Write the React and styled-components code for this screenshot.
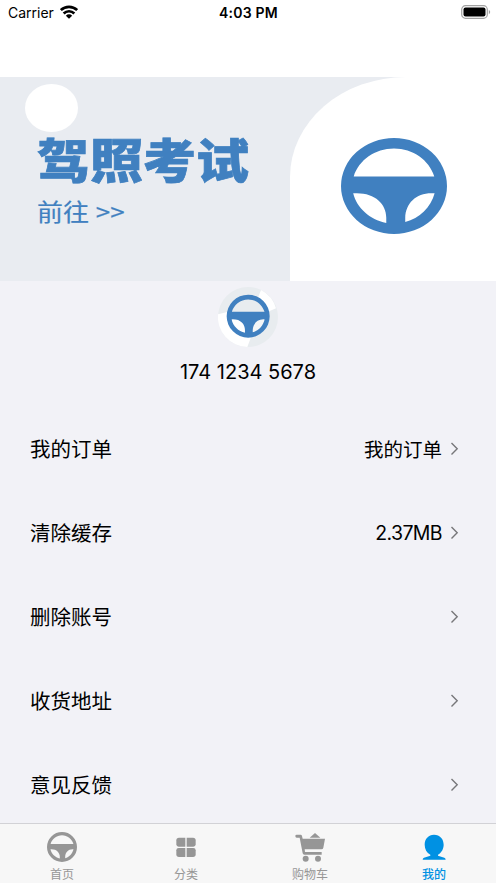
import React from 'react';
import styled, { createGlobalStyle } from 'styled-components';

// --- Styled Components ---
const GlobalStyle = createGlobalStyle`
  * {
    box-sizing: border-box;
  }

  body {
    margin: 0;
    background: #fff;
    color: #000;
    font-family: 'Inter', 'Noto Sans CJK SC', sans-serif;
  }
`;

const Screen = styled.div`
  width: 496px;
  height: 883px;
  display: flex;
  flex-direction: column;
  overflow: hidden;
  background: #f2f2f7;
`;

const StatusBar = styled.header`
  height: 77px;
  flex-shrink: 0;
  padding: 4px 5px 0 8px;
  display: grid;
  grid-template-columns: 1fr auto 1fr;
  align-items: start;
  background: #fff;
  font-size: 14px;
  line-height: 18px;
`;

const Carrier = styled.div`
  display: flex;
  align-items: center;
  gap: 6px;

  svg {
    margin-top: -2px;
  }
`;

const Clock = styled.div`
  font-weight: 600;
  letter-spacing: 0.2px;
  transform: translateX(-1px);
`;

const Battery = styled.div`
  display: flex;
  justify-content: flex-end;
  padding-top: 1px;
`;

const Banner = styled.section`
  height: 204px;
  flex-shrink: 0;
  display: flex;
  background: #e9ecf1;
`;

const BannerText = styled.div`
  width: 290px;
  padding: 7px 0 0 25px;
  color: #4080c0;
  font-family: 'Noto Sans CJK SC', sans-serif;
`;

const Dot = styled.div`
  width: 53px;
  height: 48px;
  border-radius: 50%;
  background: #fff;
`;

const BannerTitle = styled.h1`
  margin: -3px 0 0 12px;
  font-size: 53px;
  font-weight: 900;
  line-height: 58px;
  white-space: nowrap;
  transform: scaleY(0.88);
  -webkit-text-stroke: 0.8px #4080c0;
`;

const BannerLink = styled.div`
  margin: 6px 0 0 12px;
  font-size: 26px;
  line-height: 36px;
  word-spacing: 1px;
  transform: scaleY(0.9);
  -webkit-text-stroke: 0.2px #4080c0;
`;

const BannerArt = styled.div`
  flex: 1;
  display: flex;
  justify-content: center;
  padding: 61px 0 0 1px;
  border-radius: 116px 0 0 0 / 100px 0 0 0;
  background: #fff;
  color: #4080c0;
`;

const Profile = styled.section`
  height: 126px;
  flex-shrink: 0;
  display: flex;
  flex-direction: column;
  align-items: center;
  padding: 6px 0 0;
`;

const Phone = styled.div`
  margin-top: 10px;
  font-size: 20px;
  line-height: 30px;
`;

const List = styled.ul`
  flex: 1;
  min-height: 0;
  margin: 0;
  padding: 0;
  list-style: none;
`;

const Row = styled.li`
  height: 84px;
  padding: 0 37px 0 30px;
  display: flex;
  align-items: center;
  font-size: 20.5px;
`;

const RowLabel = styled.span`
  padding-bottom: 2px;
`;

const RowValue = styled.span`
  margin: 0 8px 0 auto;
  padding-bottom: ${({ $numeric }) => ($numeric ? '0' : '2px')};
  font-size: 19.5px;
  letter-spacing: ${({ $numeric }) => ($numeric ? '-0.6px' : '0')};
`;

const TabBar = styled.nav`
  height: 60px;
  flex-shrink: 0;
  display: grid;
  grid-template-columns: repeat(4, 1fr);
  border-top: 1px solid #d2d2d6;
  background: #f7f7f7;
`;

const Tab = styled.a`
  display: flex;
  flex-direction: column;
  align-items: center;
  padding-top: 7.5px;
  color: ${({ $active }) => ($active ? '#0091e3' : '#969696')};
  font-size: 12px;
  font-weight: ${({ $active }) => ($active ? 500 : 400)};
  line-height: 16px;

  svg {
    margin-bottom: 5.5px;
  }
`;

// --- Icons ---
const WheelShape = () => (
  <path
    fill="currentColor"
    fillRule="evenodd"
    d="M50 0A50 50 0 1 1 50 100A50 50 0 1 1 50 0ZM12 40H88C83 23 68 11 50 11S17 23 12 40ZM11.5 57.6C15 73 27 85 42.7 88.5V83C42.7 68 31 56 11.5 57.6ZM88.3 57.6C85 72 74 84 60.6 87.5V83C61 67 72 56 88.3 57.6Z"
  />
);

const Wheel = ({ width, height }) => (
  <svg width={width} height={height} viewBox="0 0 100 100" preserveAspectRatio="none">
    <WheelShape />
  </svg>
);

const Avatar = () => (
  <svg width="60" height="60" viewBox="0 0 180 180">
    <circle cx="90" cy="90" r="90" fill="#e8ecef" />
    <path d="M129 9A90 90 0 0 1 174 64L150 74L120 32Z" fill="#fff" />
    <path d="M0 82A90 90 0 0 0 88 180L98 153L28 75Z" fill="#fff" />
    <circle cx="90" cy="88" r="60" fill="#e8ecef" />
    <path d="M30 96L80 100V146C50 144 32 122 30 96Z" fill="#fff" />
    <path d="M150 96L100 100V142C128 140 148 120 150 96Z" fill="#f4f6f7" />
    <g transform="translate(26 23) scale(1.29)" color="#4080c0">
      <WheelShape />
    </g>
  </svg>
);

const WifiIcon = () => (
  <svg width="18" height="14" viewBox="0 0 54 42" fill="none" stroke="#000" strokeWidth="8">
    <path d="M2.5 15.5C16 2 38 2 51.5 15.5" />
    <path d="M11 25.5C20 16.5 34 16.5 43 25.5" />
    <path d="M27 41L17.5 32C23 26.5 31 26.5 36.5 32Z" fill="#000" stroke="none" />
  </svg>
);

const BatteryIcon = () => (
  <svg width="30" height="14" viewBox="0 0 30 14">
    <rect x="0.7" y="0.7" width="25.6" height="12.6" rx="3.8" fill="none" stroke="#a2a2a2" strokeWidth="1.2" />
    <rect x="2.5" y="2.5" width="22" height="9" rx="2" fill="#000" />
    <path d="M27.8 5V9.2Q29.2 8.6 29.2 7.1T27.8 5Z" fill="#a2a2a2" />
  </svg>
);

const Chevron = () => (
  <svg width="9" height="14" viewBox="0 0 9 14" fill="none" stroke="#77777a" strokeWidth="1.4">
    <path d="M1.5 1L7.2 6.8L1.5 12.6" />
  </svg>
);

const GridIcon = () => (
  <svg width="30" height="30" viewBox="0 0 90 90" fill="currentColor">
    <path d="M24 17H43V44H23A7 7 0 0 1 16 37V25A8 8 0 0 1 24 17Z" />
    <path d="M47 17H66A8 8 0 0 1 74 25V37A7 7 0 0 1 67 44H47Z" />
    <path d="M23 48H43V75H24A8 8 0 0 1 16 67V55A7 7 0 0 1 23 48Z" />
    <path d="M47 48H67A7 7 0 0 1 74 55V67A8 8 0 0 1 66 75H47Z" />
  </svg>
);

const CartIcon = () => (
  <svg width="30" height="30" viewBox="0 0 90 90" fill="currentColor">
    <path d="M5 8H17Q20 8 21 12L23 20H90L85 47Q84 52 79 52H29L30 60H80V68H28Q24 68 23 64L14 17H5Q1 17 1 12Q1 8 5 8Z" />
    <path d="M44 17L60 3L76 17Z" />
    <circle cx="32" cy="80" r="9" />
    <circle cx="69" cy="80" r="9" />
  </svg>
);

const PersonIcon = () => (
  <svg width="30" height="30" viewBox="0 0 90 90" fill="currentColor">
    <path d="M45 8C63 8 74 21 74 38C74 51 67 62 57 68V71L76 77Q80 79 80 83H11Q11 79 15 77L34 71V68C23 62 17 51 17 38C17 21 28 8 45 8Z" />
  </svg>
);

const rows = [
  { label: '我的订单', value: '我的订单' },
  { label: '清除缓存', value: '2.37MB', numeric: true },
  { label: '删除账号' },
  { label: '收货地址' },
  { label: '意见反馈' },
];

const App = () => {
  return (
    <>
      <GlobalStyle />
      <Screen>
        <StatusBar>
          <Carrier>
            Carrier
            <WifiIcon />
          </Carrier>
          <Clock>4:03 PM</Clock>
          <Battery>
            <BatteryIcon />
          </Battery>
        </StatusBar>

        <Banner>
          <BannerText>
            <Dot />
            <BannerTitle>驾照考试</BannerTitle>
            <BannerLink>前往 &gt;&gt;</BannerLink>
          </BannerText>
          <BannerArt>
            <Wheel width={106} height={96} />
          </BannerArt>
        </Banner>

        <Profile>
          <Avatar />
          <Phone>174 1234 5678</Phone>
        </Profile>

        <List>
          {rows.map(({ label, value, numeric }) => (
            <Row key={label}>
              <RowLabel>{label}</RowLabel>
              <RowValue $numeric={numeric}>{value}</RowValue>
              <Chevron />
            </Row>
          ))}
        </List>

        <TabBar>
          <Tab>
            <Wheel width={30} height={30} />
            首页
          </Tab>
          <Tab>
            <GridIcon />
            分类
          </Tab>
          <Tab>
            <CartIcon />
            购物车
          </Tab>
          <Tab $active>
            <PersonIcon />
            我的
          </Tab>
        </TabBar>
      </Screen>
    </>
  );
};

export default App;
